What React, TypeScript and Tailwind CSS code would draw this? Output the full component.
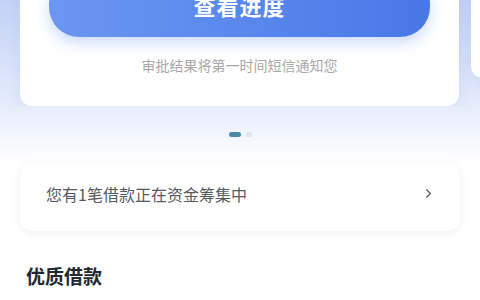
import { ChevronRight } from "lucide-react"

const font = { fontFamily: '"Noto Sans CJK SC", "Noto Sans", sans-serif' }

export default function App() {
  return (
    <div className="w-[480px] h-[300px] overflow-hidden bg-white" style={font}>
      <div className="bg-gradient-to-b from-[#b5c8f4] via-[#e4ebfb] via-70% to-white pb-[26px]">
        <div className="flex items-start gap-3 pl-5 -mt-[40px] overflow-hidden">
          <div className="shrink-0 w-[439px] rounded-xl bg-white pt-[14px] pb-[30px] px-[29px] shadow-[0_4px_14px_rgba(90,120,200,0.10)]">
            <button className="w-full h-[63px] rounded-[30px] bg-gradient-to-r from-[#6b97f1] to-[#4878e8] text-white text-[22px] font-bold tracking-[1px] shadow-[0_6px_14px_rgba(74,122,232,0.28)]">
              查看进度
            </button>
            <p className="mt-[18px] text-center text-[14px] text-[#a8a8a8]">
              审批结果将第一时间短信通知您
            </p>
          </div>
          <div className="shrink-0 w-[200px] h-[118px] rounded-xl bg-white shadow-[0_4px_14px_rgba(90,120,200,0.10)]" />
        </div>
        <div className="flex justify-center items-center gap-[5px] mt-[26px]">
          <span className="w-3 h-[5px] rounded-full bg-[#4a89a6]" />
          <span className="w-[6px] h-[5px] rounded-full bg-[#dde5ef]" />
        </div>
      </div>
      <div className="mx-5 h-[68px] rounded-xl bg-white flex items-center justify-between pl-[26px] pr-[24px] pb-[7px] shadow-[0_2px_10px_rgba(0,0,0,0.06)]">
        <span className="text-[16px] text-[#555a60]">您有1笔借款正在资金筹集中</span>
        <ChevronRight size={15} strokeWidth={1.8} className="text-[#555]" />
      </div>
      <h2 className="mt-[31px] ml-[26px] text-[19px] font-bold text-[#222832]">优质借款</h2>
    </div>
  )
}
